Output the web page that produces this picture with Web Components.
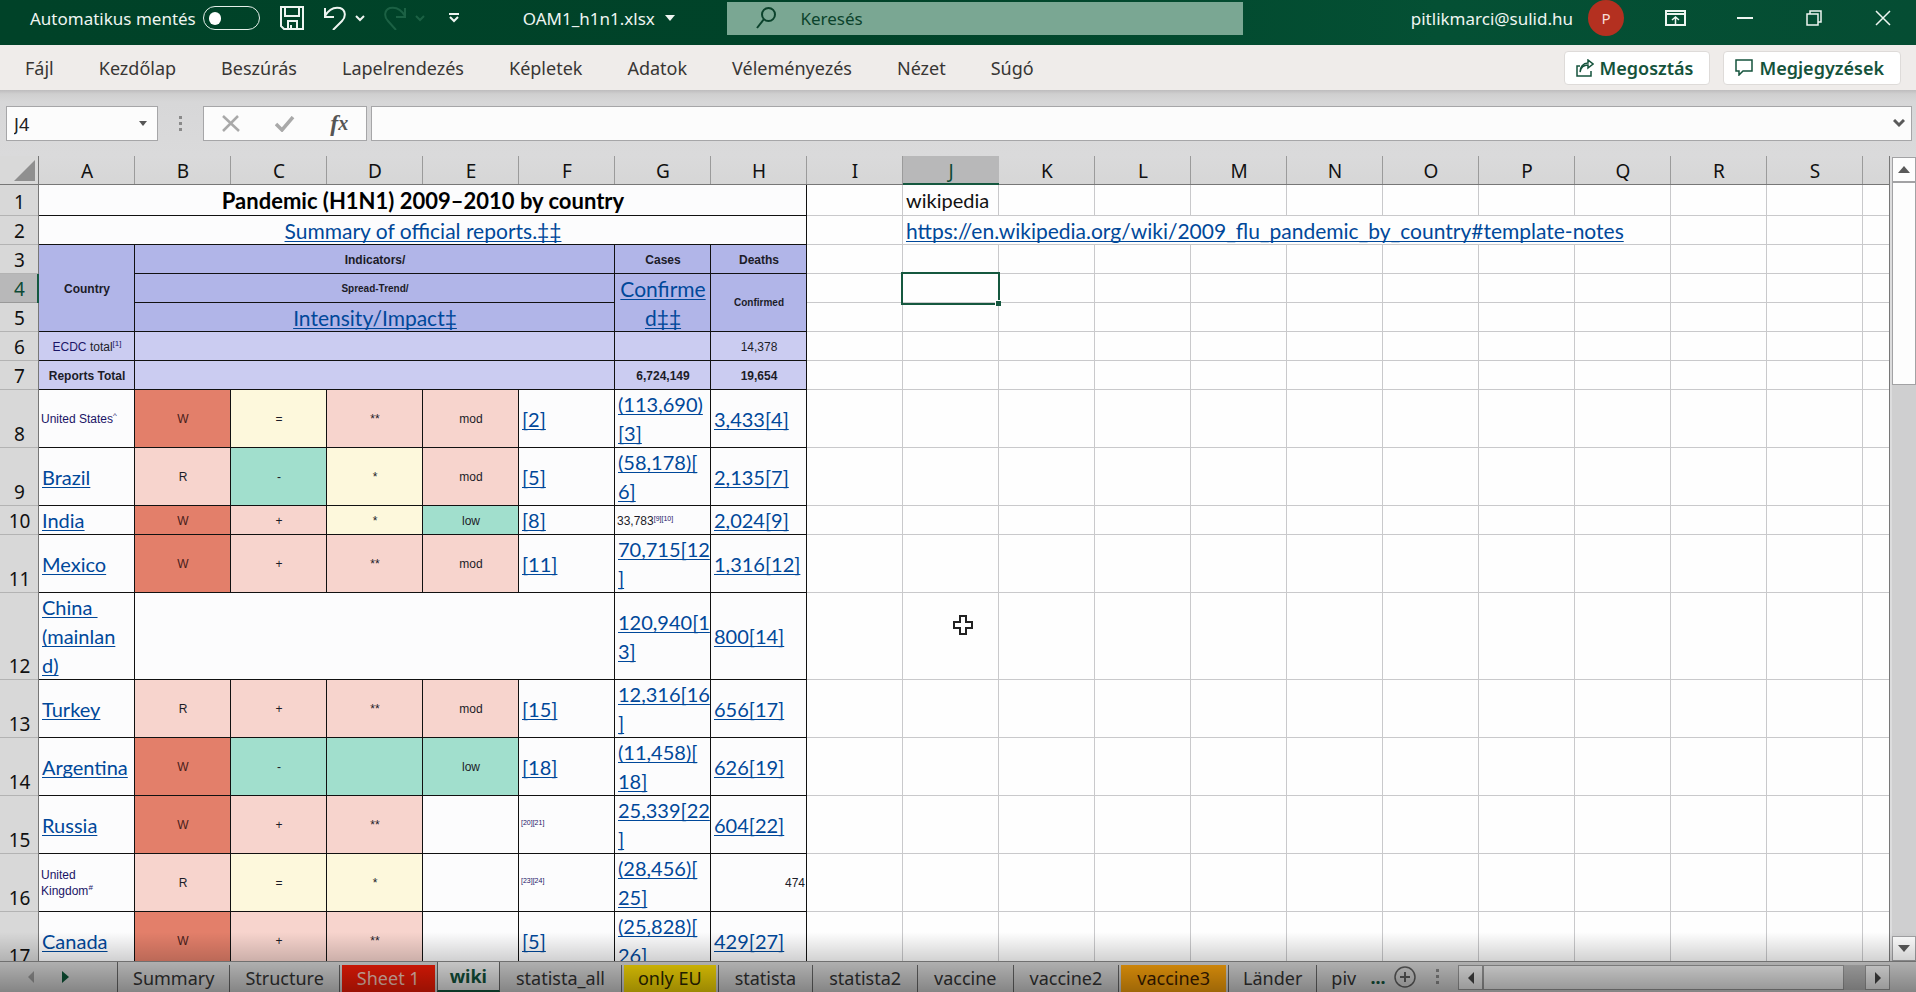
<!DOCTYPE html>
<html lang="hu">
<head>
<meta charset="utf-8">
<title>OAM1_h1n1.xlsx</title>
<style>
html,body{margin:0;height:100%;overflow:hidden}
body{font-family:"Noto Sans","Open Sans",sans-serif;font-size:18px;color:#222}
</style>
</head>
<body>
<xl-app></xl-app>
<script>
const RESET = `
*{box-sizing:border-box}
button,input{font:inherit;color:inherit;margin:0;padding:0;border:0;background:none;border-radius:0}
button{display:flex;align-items:center;justify-content:center}
svg{display:block;flex:none}
`;
function define(name, css, html, setup) {
  const tpl = document.createElement('template');
  tpl.innerHTML = `<style>${RESET}${css}</style>${html}`;
  customElements.define(name, class extends HTMLElement {
    connectedCallback() {
      if (this.shadowRoot) return;
      this.attachShadow({ mode: 'open' }).append(tpl.content.cloneNode(true));
      if (setup) setup(this.shadowRoot, this);
    }
  });
}

/* ---------- title bar ---------- */
define('xl-titlebar', `
:host{display:flex;align-items:center;height:45px;color:#eef5f1;font-size:17px;
  background:linear-gradient(90deg,#004228 0,#004329 45%,#045034 75%,#054d33 100%);padding-bottom:9px;white-space:nowrap}
.left,.right{flex:14 1 0;display:flex;align-items:center;height:36px}
.left{padding-left:30px}
label{display:flex;align-items:center;gap:7px}
input[type=checkbox]{appearance:none;width:57px;height:24px;margin:0;border:1px solid #e4efe9;border-radius:12px;display:flex;align-items:center;padding-left:5px}
input[type=checkbox]::before{content:"";width:12px;height:13px;border-radius:6px;background:#fff}
.save{margin-left:20px}.undo{margin-left:20px;gap:9px}.redo{margin-left:19px;gap:9px;color:#1b6144}
.more{margin-left:23px}
.file{margin-left:63px;gap:10px}
.search{display:flex;align-items:center;width:516px;height:33px;background:#7aa793;color:#0b432c;padding-left:29px;gap:24px}
.search input{flex:1;min-width:0;outline:0}
.search input::placeholder{color:#0b432c;opacity:1}
.right{flex-grow:13;justify-content:flex-end;padding-right:25px}
.avatar{width:36px;height:36px;border-radius:50%;background:#b43020;color:#f7dcd6;font-size:15px;margin-left:15px}
.ro{margin-left:41px}.mi{margin-left:51px}.re{margin-left:53px}.cl{margin-left:53px}
`, `
<div class="left">
<label for="auto">Automatikus mentés<input type="checkbox" id="auto"></label>
<button class="save" aria-label="Mentés"><svg width="24" height="24" viewBox="0 0 24 24" fill="none" stroke="currentColor" stroke-width="2"><path d="M1 1H23V23H4L1 20ZM5 1V10H19V1M8 23V15H17V23M11 19V23"/></svg></button>
<button class="undo" aria-label="Visszavonás"><svg width="22" height="24" viewBox="0 0 22 24" fill="none" stroke="currentColor" stroke-width="2"><path d="M1 2V11H10M1 10C5 3 11 1 16 2C22 4 22 11 18 15L9 24"/></svg><svg width="10" height="7" viewBox="0 0 10 7" fill="none" stroke="currentColor" stroke-width="2"><path d="M1 1L5 5L9 1"/></svg></button>
<button class="redo" aria-label="Mégis"><svg width="22" height="24" viewBox="0 0 22 24" fill="none" stroke="currentColor" stroke-width="2"><path d="M21 2V11H12M21 10C17 3 11 1 6 2C0 4 0 11 4 15L12 24"/></svg><svg width="10" height="7" viewBox="0 0 10 7" fill="none" stroke="currentColor" stroke-width="2"><path d="M1 1L5 5L9 1"/></svg></button>
<button class="more" aria-label="Testreszabás"><svg width="12" height="10" viewBox="0 0 12 10" fill="none" stroke="currentColor" stroke-width="2"><path d="M1 1H11M2 4L6 8L10 4"/></svg></button>
<button class="file">OAM1_h1n1.xlsx<svg width="10" height="6" viewBox="0 0 10 6"><path d="M0 0H10L5 6Z" fill="currentColor"/></svg></button>
</div>
<div class="search"><svg width="20" height="22" viewBox="0 0 20 22" fill="none" stroke="currentColor" stroke-width="2"><circle cx="12.500" cy="7.500" r="6.500"/><path d="M8 12L1 21"/></svg><input type="text" placeholder="Keresés" aria-label="Keresés"></div>
<div class="right">
<span>pitlikmarci@sulid.hu</span><button class="avatar" aria-label="Fiók">P</button>
<button class="ro" aria-label="Menüszalag"><svg width="21" height="16" viewBox="0 0 21 16" fill="none" stroke="currentColor" stroke-width="2"><path d="M1 1H20V15H1ZM1 4H20" /><path d="M10.500 14V7M7 10L10.500 7L14 10" stroke-width="1.500"/></svg></button>
<button class="mi" aria-label="Kis méret"><svg width="16" height="2"><path d="M0 1H16" stroke="currentColor" stroke-width="2"/></svg></button>
<button class="re" aria-label="Előző méret"><svg width="16" height="16" viewBox="0 0 16 16" fill="none" stroke="currentColor" stroke-width="1.500"><path d="M1 4H12V15H1ZM4 4V1H15V12H12"/></svg></button>
<button class="cl" aria-label="Bezárás"><svg width="16" height="16" viewBox="0 0 16 16" fill="none" stroke="currentColor" stroke-width="1.500"><path d="M1 1L15 15M15 1L1 15"/></svg></button>
</div>`);

/* ---------- ribbon tabs ---------- */
define('xl-ribbon', `
:host{display:flex;align-items:center;height:45px;background:#efecea;color:#383634;padding:0 15px 0 25px;white-space:nowrap}
nav{display:flex;gap:45px;flex:1}
.act{height:34px;background:#fff;border:1px solid #dedbd9;border-radius:4px;color:#15533c;font-weight:600;gap:6px;padding:0 16px 0 11px;margin-left:13px}
`, `
<nav><button>Fájl</button><button>Kezdőlap</button><button>Beszúrás</button><button>Lapelrendezés</button><button>Képletek</button><button>Adatok</button><button>Véleményezés</button><button>Nézet</button><button>Súgó</button></nav>
<button class="act"><svg width="18" height="18" viewBox="0 0 18 18" fill="none" stroke="currentColor" stroke-width="1.500"><path d="M4 7H1V17H15V12M4 13C5 8 8 6 12 6V9L17 5L12 1V4C7 4 4 8 4 13Z"/></svg>Megosztás</button>
<button class="act"><svg width="18" height="17" viewBox="0 0 18 17" fill="none" stroke="currentColor" stroke-width="1.500"><path d="M1 1H17V12H8L4 16V12H1Z"/></svg>Megjegyzések</button>`);

/* ---------- formula bar ---------- */
define('xl-formula-bar', `
:host{display:flex;height:66px;padding:16px 4px 15px 6px;background:linear-gradient(#bdbcbd 0,#cfcfcf 4px,#d7d7d8 12px,#dadadb 100%)}
.box{display:flex;align-items:center;background:#fcfcfc;border:1px solid #a6a6a8}
.name{width:152px;padding:0 10px 0 7px}
.name input{flex:1;min-width:0;font-size:18px;outline:0}
.dots{width:45px;display:flex;align-items:center;justify-content:center}
.tools{width:164px;margin-right:4px;justify-content:space-around;color:#a9a9a9}
.fx{font:italic bold 24px "Liberation Serif",serif;color:#555}
.fx small{font-size:20px}
.formula{flex:1;padding-right:6px}
.formula input{flex:1;height:100%;outline:0;padding:0 6px}
`, `
<div class="box name"><input aria-label="Név mező" value="J4"><button aria-label="Nevek"><svg width="8" height="5"><path d="M0 0H8L4 5Z" fill="#555"/></svg></button></div>
<div class="dots"><svg width="3" height="16" fill="#8a8a8a"><path d="M0 0H3V3H0ZM0 6H3V9H0ZM0 12H3V15H0Z"/></svg></div>
<div class="box tools"><button aria-label="Mégse"><svg width="18" height="17" viewBox="0 0 18 17" fill="none" stroke="currentColor" stroke-width="2.500"><path d="M1 1L17 16M16 1L1 16"/></svg></button><button aria-label="Beírás"><svg width="20" height="16" viewBox="0 0 20 16" fill="none" stroke="currentColor" stroke-width="3.500"><path d="M1 8L7 14L18 1"/></svg></button><button class="fx" aria-label="Függvény beszúrása">f<small>x</small></button></div>
<div class="box formula"><input aria-label="Szerkesztőléc"><button aria-label="Kibontás"><svg width="12" height="9" viewBox="0 0 12 9" fill="none" stroke="#5a5a5a" stroke-width="3"><path d="M1 1L6 6L11 1"/></svg></button></div>`);

/* ---------- worksheet ---------- */
const L = (t) => `<a href="#">${t}</a>`;
const td = (html, cls = '', attr = '') => `<td class="k ${cls}" ${attr}>${html}</td>`;
const sev = { W: 'red c', R: 'pink c', '=': 'yel c', '-': 'grn c', '+': 'pink c', '*': 'yel c', '**': 'pink c', mod: 'pink c', low: 'grn c', '': 'w', g: 'grn c' };
const ind = (list) => list.map(v => td(v === 'g' ? '' : v, sev[v])).join('');
const rows = [
  [31, td('Pandemic (H1N1) 2009–2010 by country', 'w ttl', 'colspan="8"')],
  [29, td(L('Summary of official reports.‡‡'), 'w mid big', 'colspan="8"')],
  [29, td('Country', 'hd b', 'rowspan="3"') + td('Indicators/', 'hd b', 'colspan="5"') + td('Cases', 'hd b') + td('Deaths', 'hd b')],
  [29, td('Spread-Trend/', 'hd b s', 'colspan="5"') + td(L('Confirme<br>d‡‡'), 'hd mid big', 'rowspan="2"') + td('Confirmed', 'hd b s', 'rowspan="2"')],
  [29, td(L('Intensity/Impact‡'), 'hd mid big', 'colspan="5"')],
  [29, td('<i>ECDC</i> total<sup>[1]</sup>', 'lt c') + td('', 'lt', 'colspan="5"') + td('', 'lt') + td('14,378', 'lt c')],
  [29, td('Reports Total', 'lt b') + td('', 'lt', 'colspan="5"') + td('6,724,149', 'lt b') + td('19,654', 'lt b')],
  [58, td('United States<sup>^</sup>', 'w sm nav') + ind(['W', '=', '**', 'mod']) + td(L('[2]'), 'w') + td(L('(113,690)<br>[3]'), 'w') + td(L('3,433[4]'), 'w')],
  [58, td(L('Brazil'), 'w') + ind(['R', '-', '*', 'mod']) + td(L('[5]'), 'w') + td(L('(58,178)[<br>6]'), 'w') + td(L('2,135[7]'), 'w')],
  [29, td(L('India'), 'w') + ind(['W', '+', '*', 'low']) + td(L('[8]'), 'w') + td('33,783<sup class="t">[9][10]</sup>', 'w sm') + td(L('2,024[9]'), 'w')],
  [58, td(L('Mexico'), 'w') + ind(['W', '+', '**', 'mod']) + td(L('[11]'), 'w') + td(L('70,715[12<br>]'), 'w') + td(L('1,316[12]'), 'w')],
  [87, td(L('China&nbsp;<br>(mainlan<br>d)'), 'w') + td('', 'w', 'colspan="5"') + td(L('120,940[1<br>3]'), 'w') + td(L('800[14]'), 'w')],
  [58, td(L('Turkey'), 'w') + ind(['R', '+', '**', 'mod']) + td(L('[15]'), 'w') + td(L('12,316[16<br>]'), 'w') + td(L('656[17]'), 'w')],
  [58, td(L('Argentina'), 'w') + ind(['W', '-', 'g', 'low']) + td(L('[18]'), 'w') + td(L('(11,458)[<br>18]'), 'w') + td(L('626[19]'), 'w')],
  [58, td(L('Russia'), 'w') + ind(['W', '+', '**', '']) + td('<sup class="t">[20][21]</sup>', 'w sm') + td(L('25,339[22<br>]'), 'w') + td(L('604[22]'), 'w')],
  [58, td('United<br>Kingdom<sup>#</sup>', 'w sm nav') + ind(['R', '=', '*', '']) + td('<sup class="t">[23][24]</sup>', 'w sm') + td(L('(28,456)[<br>25]'), 'w') + td('474', 'w sm r')],
  [58, td(L('Canada'), 'w') + ind(['W', '+', '**', '']) + td(L('[5]'), 'w') + td(L('(25,828)[<br>26]'), 'w') + td(L('429[27]'), 'w')],
];
const free = (r) => {
  const e = (n) => '<td></td>'.repeat(n);
  if (r === 1) return e(1) + '<td>wikipedia</td>' + e(10);
  if (r === 2) return e(1) + '<td class="big" colspan="8">' + L('https://en.wikipedia.org/wiki/2009_flu_pandemic_by_country#template-notes') + '</td>' + e(3);
  if (r === 4) return e(1) + '<td class="cur"><span class="sel"></span></td>' + e(10);
  return e(12);
};
const table = `<table><colgroup><col class="n">${'<col>'.repeat(20)}</colgroup>
<thead><tr><th class="corner"><svg width="21" height="21"><path d="M21 0V21H0Z" fill="#8f8f8f"/></svg></th>${[...'ABCDEFGHIJKLMNOPQRS'].map(c => `<th scope="col"${c === 'J' ? ' class="on"' : ''}>${c}</th>`).join('')}<th></th></tr></thead>
<tbody>${rows.map(([h, cells], i) => `<tr class="h${h}"><th scope="row"${i === 3 ? ' class="on"' : ''}>${i + 1}</th>${cells}${free(i + 1)}</tr>`).join('')}</tbody></table>`;

define('xl-sheet', `
:host{display:flex;flex:1 1 0;min-height:0;background:#dcdcdd}
.view{flex:1 1 0;min-width:0;overflow:hidden;position:relative;border-right:1px solid #777;
  background:#fefefe}
table{border-spacing:0;table-layout:fixed;width:1959px;font-size:20px;font-family:Lato,"Noto Sans",sans-serif;line-height:29px;color:#111}
col{width:96px}col.n{width:39px}
th,td{padding:0;white-space:nowrap;vertical-align:middle}
td{padding:0 3px;box-shadow:inset -1px -1px 0 #c9c9cb}
.h29{height:29px}.h31{height:31px}.h58{height:58px}.h87{height:87px}
thead th{height:29px;font:400 19px/28px "Noto Sans",sans-serif;background:linear-gradient(90deg,transparent 95px,#9b9b9b 95px),linear-gradient(#dadadb,#d6d6d6);box-shadow:inset 0 -1px 0 #777}
thead th.on{background:#b8b8b9;color:#0d4a35;box-shadow:inset 0 -2px 0 #15583f}
thead th.corner{background:#d9d9d9;box-shadow:inset -1px -1px 0 #777}
.corner svg{margin:0 0 0 14px}
tbody th{font:400 19px/28px "Noto Sans",sans-serif;vertical-align:bottom;background:#d8d8d8;box-shadow:inset -1px 0 0 #777,inset 0 -1px 0 #b3b3b3}
tbody th.on{background:#b8b8b9;color:#0d4a35;box-shadow:inset -2px 0 0 #15583f,inset 0 -1px 0 #999}
a{color:#00489a;text-decoration:underline;text-decoration-thickness:1px;text-underline-offset:2px;text-decoration-skip-ink:none}
td.k{box-shadow:inset -1px -1px 0 #111}
.w{background:#fcfcfd}
.ttl{font-size:22px;font-weight:700;text-align:center;color:#000}
.big{font-size:21px}.mid{text-align:center}
.hd{background:#b1b5e8}.lt{background:#cbccf1}
.b,.c,.sm{font-family:"Liberation Sans",Arial,sans-serif;font-size:12px;line-height:16px;padding:0 2px;color:#1c1c28}
.b,.c{text-align:center}.b{font-weight:700}.b.s{font-size:10px}
.r{text-align:right}
.red{background:#e37f6a;color:#48201a}.pink{background:#f7d4cd}.yel{background:#fdf8dc}.grn{background:#a1dfcd}
.nav,i,sup{color:#1a1466;font-style:normal}
sup{font-size:8px;line-height:0}sup.t{font-size:7px;vertical-align:4px}
.cur{position:relative;overflow:visible}
.sel{position:absolute;inset:-2px -1px -2px -2px;border:2px solid #15583f}
.sel::after{content:"";position:absolute;right:-3px;bottom:-3px;width:5px;height:5px;background:#15583f;border:solid #fff;border-width:1px 0 0 1px;box-sizing:content-box}
.pointer{position:absolute;left:952px;top:458px}
.bar{width:26px;display:flex;flex-direction:column;padding:1px 0 0 2px}
.bar button{height:25px;background:#fdfdfd;border:1px solid #a2a2a4}
.thumb{height:203px;background:#fdfdfd;border:1px solid #a2a2a4}
.track{flex:1;background:#cfcfd0}
`, `<div class="view">${table}<svg class="pointer" width="22" height="22" viewBox="0 0 22 22"><path d="M8 2H14V8H20V14H14V20H8V14H2V8H8Z" fill="#fff" stroke="#222" stroke-width="2"/></svg></div>
<div class="bar"><button aria-label="Fel"><svg width="12" height="7"><path d="M0 7L6 0L12 7Z" fill="#5a5a5a"/></svg></button><div class="thumb"></div><div class="track"></div><button aria-label="Le"><svg width="12" height="7"><path d="M0 0H12L6 7Z" fill="#5a5a5a"/></svg></button></div>`);

/* ---------- sheet tabs ---------- */
define('xl-tabs', `
:host{display:flex;height:31px;background:#d6d6d6;border-top:1px solid #888;color:#333;white-space:nowrap;padding-right:26px}
.nav{width:117px;display:flex;padding:0 48px 0 28px;justify-content:space-between}
.tabs{display:flex;flex:0 1 1245px;min-width:0;overflow:hidden;border-left:1px solid #666}
.tabs button{padding:0 15px 2px;margin-top:3px;border-right:1px solid #666;height:27px;flex:none;line-height:24px}
.tabs .red{background:#f81c06;color:#f8c9bd;margin-left:2px;border-right:0}
.tabs .on{background:#f0f0f0;color:#12543c;font-weight:700;margin:-1px 0 0 2px;height:31px;border:solid #666;border-width:0 1px 2px;border-bottom-color:#15583f;padding:0 12px}
.tabs .on~button{padding:0 16px 2px}
.tabs .on~.yel{background:#fbdc05;color:#2c2800;margin:3px 2px 0;border-right:0;padding:0 14px 2px}
.tabs .yel+button,.tabs .org+button{border-left:1px solid #666}
.tabs .org{background:#ffa60c;color:#3c1c00;margin:3px 2px 0;border-right:0}
.tabs .on~.org~button{padding:0 14px 2px}
.tabs .last{border:0}
.ell{width:32px;font-weight:700;color:#12543c;line-height:28px}
.dots{width:42px;display:flex;align-items:center;justify-content:center}
.h{flex:1;display:flex;margin:3px 0;background:#b8b8b8;height:25px}
.h button{width:25px;background:#f0f0f0;border:1px solid #999}
.h .thumb{flex:1;background:#f0f0f0;border:1px solid #999;margin-right:21px}
`, `
<div class="nav"><button aria-label="Előző lap"><svg width="6" height="12"><path d="M6 0V12L0 6Z" fill="#999"/></svg></button><button aria-label="Következő lap"><svg width="7" height="12"><path d="M0 0V12L7 6Z" fill="#0d5638"/></svg></button></div>
<div class="tabs"><button>Summary</button><button>Structure</button><button class="red">Sheet 1</button><button class="on">wiki</button><button>statista_all</button><button class="yel">only EU</button><button>statista</button><button>statista2</button><button>vaccine</button><button>vaccine2</button><button class="org">vaccine3</button><button>Länder</button><button class="last">piv</button></div>
<button class="ell" aria-label="További lapok">...</button>
<button aria-label="Új lap"><svg width="22" height="22" viewBox="0 0 22 22" fill="none" stroke="#5e5e5e" stroke-width="1.500"><circle cx="11" cy="11" r="10"/><path d="M6 11H16M11 6V16" stroke-width="2"/></svg></button>
<div class="dots"><svg width="3" height="16" fill="#888"><path d="M0 0H3V3H0ZM0 6H3V9H0ZM0 12H3V15H0Z"/></svg></div>
<div class="h"><button aria-label="Balra"><svg width="6" height="12"><path d="M6 0V12L0 6Z" fill="#444"/></svg></button><div class="thumb"></div><button aria-label="Jobbra"><svg width="6" height="12"><path d="M0 0V12L6 6Z" fill="#444"/></svg></button></div>`);

/* ---------- window ---------- */
define('xl-app', `
:host{display:flex;flex-direction:column;height:100vh;position:relative;overflow:hidden}
.shade{position:absolute;left:0;right:0;bottom:0;height:60px;pointer-events:none;background:linear-gradient(transparent,rgba(0,0,0,.18) 50%,rgba(0,0,0,.38))}
`, `<xl-titlebar></xl-titlebar><xl-ribbon></xl-ribbon><xl-formula-bar></xl-formula-bar><xl-sheet></xl-sheet><xl-tabs></xl-tabs><div class="shade"></div>`);
</script>
</body>
</html>
